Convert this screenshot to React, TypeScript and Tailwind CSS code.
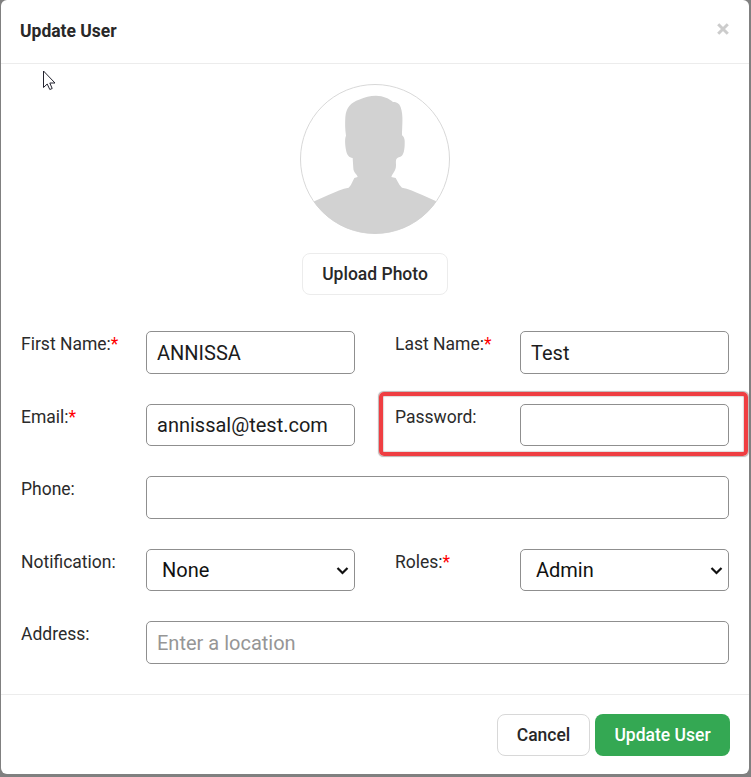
import { useState } from 'react';
import type { ReactNode } from 'react';

const inputClass = 'block w-full rounded-[5px] border border-[#8f8f8f] bg-white px-2.5 text-[20px] text-[#1c1c1c] outline-none placeholder:text-[#969696]';

const Label = ({ children, required }: { children: ReactNode; required?: boolean }) => (
    <label className="w-[125px] shrink-0 whitespace-nowrap pt-px text-[17.5px] leading-6 text-[#2b2b2b]">
        {children}
        {required && <span className="text-[#ff0000]">*</span>}
    </label>
);

const Select = ({ value }: { value: string }) => (
    <div className="relative w-full">
        <select defaultValue={value} className="block h-[42px] w-full appearance-none rounded-[5px] border border-[#8f8f8f] bg-white pl-[15px] text-[20px] text-[#111111] outline-none">
            <option>{value}</option>
        </select>
        <svg className="pointer-events-none absolute right-[6px] top-[17px]" width="13" height="9" viewBox="0 0 13 9" fill="none" stroke="#111111" strokeWidth="2.2">
            <path d="M1.5 2 6.5 7 11.5 2" />
        </svg>
    </div>
);

const Avatar = () => (
    <svg width="150" height="150" viewBox="30 27 450 450">
        <defs>
            <clipPath id="avatar">
                <circle cx="255" cy="252" r="224" />
            </clipPath>
        </defs>
        <path
            clipPath="url(#avatar)"
            fill="#d2d2d2"
            d="M168 182C165 162 165 145 166 126C168 97 184 82 207 74C225 66 240 62 258 62C280 62 298 71 309 81C321 81 328 85 332 97C341 122 336 152 336 181C344 187 345 197 344 211C343 229 340 244 329 246C315 249 318 259 318 270C318 289 309 291 304 306L317 309L324 322Q329 333 336 338C354 341 375 350 397 360L437 378L480 477H30L73 379L115 360C137 350 158 341 176 338Q184 330 187 321L193 309L203 306C200 297 190 292 190 280L188 249C177 247 171 242 168 225C165 208 164 190 168 182Z"
        />
        <circle cx="255" cy="252" r="223.5" fill="none" stroke="#d0d0d0" strokeWidth="2.5" />
    </svg>
);

export default function App() {
    const [firstName, setFirstName] = useState('ANNISSA');
    const [lastName, setLastName] = useState('Test');
    const [email, setEmail] = useState('annissal@test.com');

    return (
        <div className="h-[777px] w-[751px] overflow-hidden bg-[#808080] pl-px font-['Roboto',sans-serif]">
            <div className="relative flex h-[774px] w-[748px] flex-col rounded-[6px] bg-white">
                {/* Header */}
                <div className="flex h-16 items-center justify-between border-b border-[#ececec] pl-[19px] pr-5">
                    <h1 className="pb-px text-[17.5px] font-bold leading-6 text-[#282828]">Update User</h1>
                    <button className="mb-[6px]" aria-label="Close">
                        <svg width="12" height="12" viewBox="0 0 12 12" stroke="#cccccc" strokeWidth="3">
                            <path d="M1.2 1.2 10.8 10.8M10.8 1.2 1.2 10.8" />
                        </svg>
                    </button>
                </div>

                {/* Body */}
                <div className="h-[630px] px-5 pt-5">
                    <div className="flex flex-col items-center">
                        <Avatar />
                        <button className="mt-[19px] h-[42px] w-[146px] rounded-[8px] border border-[#ececec] text-[17.5px] font-medium leading-6 text-[#282828]">
                            Upload Photo
                        </button>
                    </div>

                    <form className="mt-9 flex flex-col gap-[30px]" onSubmit={(e) => e.preventDefault()}>
                        <div className="grid grid-cols-2 gap-x-10">
                            <div className="flex">
                                <Label required>First Name:</Label>
                                <input className={`${inputClass} h-[43px]`} value={firstName} onChange={(e) => setFirstName(e.target.value)} />
                            </div>
                            <div className="flex">
                                <Label required>Last Name:</Label>
                                <input className={`${inputClass} h-[43px]`} value={lastName} onChange={(e) => setLastName(e.target.value)} />
                            </div>
                        </div>
                        <div className="grid grid-cols-2 gap-x-10">
                            <div className="flex">
                                <Label required>Email:</Label>
                                <input className={`${inputClass} h-[42px]`} value={email} onChange={(e) => setEmail(e.target.value)} />
                            </div>
                            <div className="relative flex">
                                <Label>Password:</Label>
                                <input type="password" className={`${inputClass} h-[42px]`} />
                                {/* Highlight */}
                                <div className="pointer-events-none absolute -bottom-[10px] -left-4 -right-[19px] -top-3 rounded-[5px] border-[4px] border-[#ef3e42] shadow-[0_0_1px_0.5px_rgba(110,90,90,0.45),inset_0_0_1px_0.5px_rgba(110,90,90,0.4)]" />
                            </div>
                        </div>
                        <div className="flex">
                            <Label>Phone:</Label>
                            <input className={`${inputClass} h-[43px]`} />
                        </div>
                        <div className="grid grid-cols-2 gap-x-10">
                            <div className="flex">
                                <Label>Notification:</Label>
                                <Select value="None" />
                            </div>
                            <div className="flex">
                                <Label required>Roles:</Label>
                                <Select value="Admin" />
                            </div>
                        </div>
                        <div className="flex">
                            <Label>Address:</Label>
                            <input className={`${inputClass} h-[43px]`} placeholder="Enter a location" />
                        </div>
                    </form>
                </div>

                {/* Footer */}
                <div className="flex h-20 items-start justify-end gap-[5px] border-t border-[#ececec] pr-[19px] pt-[19px]">
                    <button className="h-[42px] w-[93px] rounded-[8px] border border-[#d8d8d8] text-[17.5px] font-medium leading-6 text-[#282828]">Cancel</button>
                    <button className="h-[42px] w-[135px] rounded-[8px] bg-[#34a853] text-[17.5px] font-medium leading-6 text-white">Update User</button>
                </div>

                {/* Pointer */}
                <svg className="absolute left-[42px] top-[70px]" width="13" height="21" viewBox="0 0 13 21" fill="white" stroke="#22222e" strokeWidth="1">
                    <path d="M.5 1V17.5L4.2 14L6.8 19.5L9.2 18.5L6.8 13H12Z" />
                </svg>
            </div>
        </div>
    );
}
